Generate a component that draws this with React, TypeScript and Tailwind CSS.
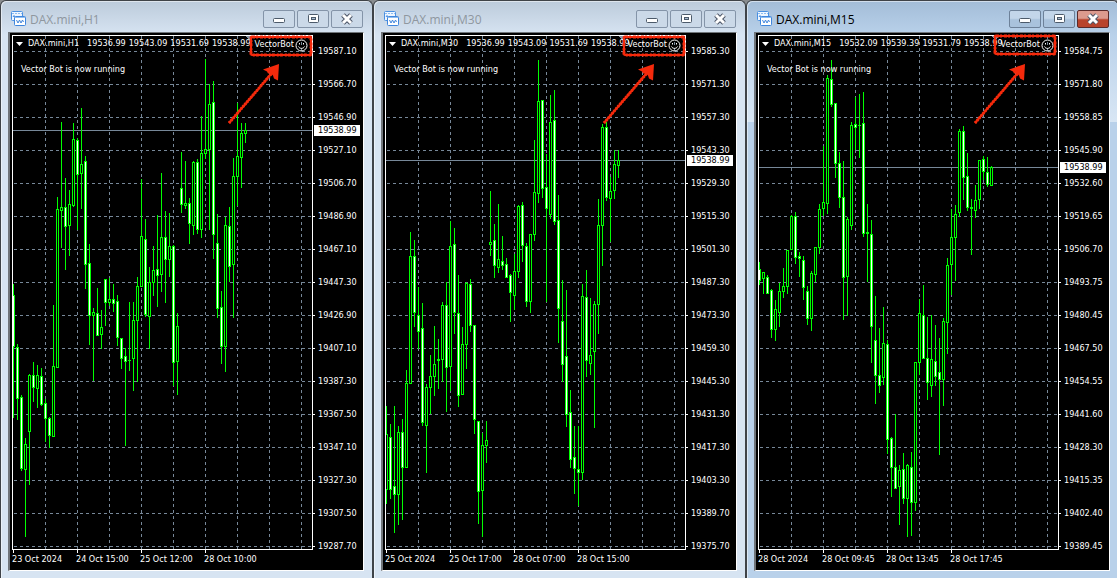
import React from 'react'
import clsx from 'clsx'

// high, body top, body bottom, low, 1 = falling bar
type Candle = [number, number, number, number, number]

interface ChartData {
  symbol: string
  quotes: string[]
  prices: string[]
  times: string[]
  bid: string
  bidY: number
  candles: Candle[]
  active?: boolean
  arrow: [number, number]
  box: [number, number]
}

const H1: Candle[] = [
  [284, 295, 347, 418, 1], [344, 347, 399, 420, 1], [395, 397, 469, 471, 1], [438, 444, 470, 537, 0],
  [374, 375, 432, 485, 0], [362, 375, 388, 402, 1], [365, 375, 389, 408, 0], [368, 376, 405, 406, 1],
  [399, 403, 419, 442, 1], [417, 418, 436, 448, 1], [305, 366, 437, 437, 0], [197, 209, 368, 368, 0],
  [122, 207, 211, 248, 0], [178, 207, 227, 270, 1], [190, 204, 226, 256, 0], [123, 139, 206, 207, 0],
  [138, 140, 175, 230, 1], [108, 164, 174, 209, 0], [156, 161, 265, 289, 1], [244, 263, 316, 345, 1],
  [308, 312, 316, 381, 0], [288, 313, 336, 336, 1], [310, 327, 335, 349, 0], [279, 279, 303, 326, 1],
  [278, 299, 303, 306, 0], [284, 299, 304, 312, 1], [295, 301, 338, 346, 1], [338, 338, 359, 369, 1],
  [348, 356, 362, 446, 1], [302, 360, 361, 371, 0], [302, 320, 359, 391, 0], [277, 286, 321, 382, 0],
  [179, 236, 287, 287, 0], [219, 239, 315, 317, 1], [267, 282, 317, 349, 0], [246, 270, 283, 296, 0],
  [215, 269, 276, 307, 1], [173, 237, 275, 292, 0], [211, 237, 260, 303, 1], [213, 246, 260, 277, 0],
  [245, 246, 363, 386, 1], [313, 326, 362, 395, 0], [152, 188, 205, 213, 1], [161, 203, 206, 209, 0],
  [198, 203, 224, 244, 1], [161, 162, 226, 235, 0], [159, 162, 230, 234, 1], [116, 153, 230, 238, 0],
  [59, 149, 154, 159, 0], [84, 104, 150, 230, 0], [81, 102, 235, 259, 1], [214, 243, 309, 318, 1],
  [291, 307, 347, 364, 1], [217, 225, 347, 372, 0], [207, 226, 267, 282, 1], [158, 176, 265, 318, 0],
  [103, 156, 177, 206, 0], [123, 133, 158, 188, 0], [123, 130, 134, 143, 0],
]

const M30: Candle[] = [
  [406, 434, 490, 504, 0], [424, 437, 490, 499, 1], [406, 486, 495, 533, 1], [426, 432, 495, 525, 0],
  [419, 432, 468, 520, 1], [370, 383, 468, 468, 0], [232, 256, 384, 384, 0], [240, 256, 313, 327, 1],
  [287, 315, 332, 349, 1], [303, 328, 423, 426, 1], [384, 387, 426, 473, 0], [355, 376, 388, 414, 0],
  [326, 364, 377, 396, 0], [339, 359, 361, 389, 0], [302, 305, 360, 382, 0], [282, 305, 368, 412, 1],
  [221, 246, 367, 391, 0], [228, 244, 313, 334, 1], [275, 313, 396, 407, 1], [327, 344, 395, 395, 0],
  [282, 283, 345, 369, 0], [279, 284, 326, 332, 1], [325, 325, 420, 434, 1], [421, 421, 492, 524, 1],
  [433, 445, 491, 537, 0], [421, 440, 446, 463, 0], [191, 242, 245, 256, 0], [224, 240, 266, 278, 1],
  [204, 259, 268, 273, 0], [236, 261, 266, 270, 1], [258, 264, 278, 278, 1], [274, 275, 293, 322, 1],
  [254, 271, 296, 310, 0], [205, 206, 272, 278, 0], [202, 205, 246, 262, 1], [243, 246, 302, 307, 1],
  [234, 234, 302, 313, 0], [140, 192, 235, 241, 0], [60, 101, 194, 203, 0], [100, 100, 189, 198, 1],
  [154, 187, 209, 302, 1], [95, 122, 215, 219, 0], [90, 120, 222, 225, 1], [195, 220, 309, 343, 1],
  [280, 321, 365, 382, 1], [290, 356, 415, 427, 1], [390, 412, 460, 468, 1], [426, 457, 469, 494, 1],
  [426, 469, 473, 506, 1], [284, 296, 473, 480, 0], [270, 297, 361, 377, 1], [298, 355, 364, 375, 0],
  [301, 304, 352, 428, 0], [199, 225, 305, 334, 0], [124, 127, 226, 266, 0], [122, 127, 198, 201, 1],
  [177, 191, 199, 242, 0], [150, 164, 191, 199, 0], [150, 160, 166, 178, 0],
]

const M15: Candle[] = [
  [262, 269, 281, 285, 1], [272, 272, 279, 294, 0], [275, 277, 294, 294, 1], [289, 290, 330, 338, 1],
  [300, 309, 330, 341, 0], [283, 291, 313, 327, 0], [268, 286, 292, 298, 0], [250, 250, 287, 294, 0],
  [215, 216, 250, 250, 0], [212, 216, 258, 264, 1], [252, 256, 259, 277, 1], [256, 260, 288, 300, 1],
  [286, 291, 319, 325, 1], [271, 273, 319, 331, 0], [247, 247, 275, 282, 0], [204, 209, 248, 254, 0],
  [146, 202, 209, 216, 0], [75, 78, 204, 214, 0], [60, 79, 105, 107, 1], [103, 103, 164, 178, 1],
  [152, 163, 198, 208, 1], [161, 197, 278, 320, 1], [217, 219, 277, 316, 0], [122, 125, 226, 230, 0],
  [97, 124, 128, 150, 1], [94, 125, 126, 158, 0], [92, 123, 234, 237, 1], [204, 232, 234, 282, 0],
  [220, 234, 327, 363, 1], [296, 340, 376, 404, 1], [328, 375, 386, 393, 1], [307, 343, 378, 385, 0],
  [340, 344, 440, 454, 1], [437, 438, 468, 497, 1], [414, 467, 489, 489, 1], [465, 470, 487, 525, 0],
  [453, 469, 499, 504, 1], [464, 465, 499, 537, 0], [452, 467, 503, 536, 1], [362, 362, 503, 511, 0],
  [299, 313, 363, 375, 0], [285, 315, 359, 359, 1], [317, 358, 383, 400, 1], [315, 359, 386, 397, 0],
  [325, 361, 377, 386, 1], [338, 372, 380, 455, 1], [318, 321, 380, 406, 0], [258, 265, 323, 354, 0],
  [209, 237, 265, 295, 0], [205, 214, 238, 281, 0], [129, 131, 213, 217, 0], [126, 131, 178, 200, 1],
  [153, 176, 208, 211, 1], [199, 207, 209, 255, 0], [185, 200, 211, 218, 0], [160, 160, 200, 209, 0],
  [156, 159, 172, 180, 1], [157, 172, 185, 187, 1], [166, 167, 186, 186, 0],
]

const charts: ChartData[] = [
  {
    symbol: 'DAX.mini,H1',
    quotes: ['19536.99', '19543.09', '19531.69', '19538.99'],
    prices: [
      '19587.10', '19566.70', '19546.90', '19527.10', '19506.70', '19486.90', '19467.10', '19447.30',
      '19426.90', '19407.10', '19387.30', '19367.50', '19347.10', '19327.30', '19307.50', '19287.70',
    ],
    times: ['23 Oct 2024', '24 Oct 15:00', '25 Oct 12:00', '28 Oct 10:00'],
    bid: '19538.99',
    bidY: 130,
    candles: H1,
    arrow: [229, 279],
    box: [251, 37],
  },
  {
    symbol: 'DAX.mini,M30',
    quotes: ['19536.99', '19543.09', '19531.69', '19538.99'],
    prices: [
      '19585.30', '19571.30', '19557.30', '19543.30', '19529.30', '19515.30', '19501.30', '19487.30',
      '19473.30', '19459.30', '19445.30', '19431.30', '19417.30', '19403.30', '19389.70', '19375.70',
    ],
    times: ['25 Oct 2024', '25 Oct 17:00', '28 Oct 07:00', '28 Oct 15:00'],
    bid: '19538.99',
    bidY: 160,
    candles: M30,
    arrow: [231, 281],
    box: [251, 37],
  },
  {
    symbol: 'DAX.mini,M15',
    quotes: ['19532.09', '19539.39', '19531.79', '19538.99'],
    prices: [
      '19584.75', '19571.80', '19558.85', '19545.90', '19532.60', '19519.65', '19506.70', '19493.75',
      '19480.45', '19467.50', '19454.55', '19441.60', '19428.30', '19415.35', '19402.40', '19389.45',
    ],
    times: ['28 Oct 2024', '28 Oct 09:45', '28 Oct 13:45', '28 Oct 17:45'],
    bid: '19538.99',
    bidY: 167,
    candles: M15,
    active: true,
    arrow: [229, 279],
    box: [249, 36],
  },
]

const gridX = [45, 77, 109, 141, 173, 205, 237, 269, 301]
const gridY = Array.from({ length: 16 }, (_, i) => 51 + i * 33)

const ChartIcon: React.FC = () => (
  <svg width="15" height="15" viewBox="0 0 15 15" fill="none" className="shrink-0">
    <rect x="0.500" y="0.500" width="11" height="9" rx="1" fill="#eef6ff" stroke="#4a90e2" />
    <path d="M1 2.500h10" stroke="#8fbdf0" strokeDasharray="2 1" />
    <path d="M2 6 3 4.500 4 6" stroke="#3f86dd" />
    <rect x="3.500" y="5.500" width="11" height="9" rx="1" fill="#fff" stroke="#3f86dd" />
    <path d="M4 6.500h10" stroke="#8fbdf0" />
    <path d="M5.500 9 7 12l1.500-3L10 12l1.500-3 1 2" stroke="#3f86dd" />
  </svg>
)

const WindowButton: React.FC<{ label: string; danger?: boolean; active?: boolean; children: React.ReactNode }> = ({
  label,
  danger,
  active,
  children,
}) => (
  <button
    aria-label={label}
    className={clsx(
      'flex h-[18px] w-8 items-center justify-center rounded-[2px] border',
      danger
        ? 'border-[#5a2a2a] bg-linear-to-b from-[#dc9a8e] from-45% to-[#b8432c] to-55%'
        : active
          ? 'border-[#6d8199] bg-linear-to-b from-[#c3d6ea] from-45% to-[#a9c2dc] to-55%'
          : 'border-[#8494a8] bg-[#cbd9e8]'
    )}
  >
    <svg width="14" height="12" viewBox="0 0 14 12" fill="none">
      {children}
    </svg>
  </button>
)

const TitleBar: React.FC<{ title: string; active?: boolean }> = ({ title, active }) => (
  <header className="flex h-[31px] items-center pt-1 pr-[9px] pl-[10px]">
    <ChartIcon />
    <h2
      className={clsx(
        "ml-1 flex-1 pt-[2px] font-['Open_Sans','Noto_Sans',sans-serif] text-[12px] leading-4",
        active ? 'text-black' : 'text-[#8f979f]'
      )}
    >
      {title}
    </h2>
    <div className="mb-1 flex gap-[2px] pt-1">
      <WindowButton label="Minimize" active={active}>
        <rect x="1.500" y="5.500" width="11" height="4" rx="1" fill="#fff" stroke="#4c5a6a" />
      </WindowButton>
      <WindowButton label="Restore" active={active}>
        <rect x="2.500" y="1.500" width="10" height="8" rx="1" fill="#fff" stroke="#4c5a6a" />
        <rect x="5.500" y="4.500" width="4" height="2" fill="#a9bcd0" stroke="#4c5a6a" />
      </WindowButton>
      <WindowButton label="Close" active={active} danger={active}>
        <path d="M3 2 11 10M11 2 3 10" stroke="#4c5566" strokeWidth="5" />
        <path d="M3 2 11 10M11 2 3 10" stroke="#fff" strokeWidth="3" />
      </WindowButton>
    </div>
  </header>
)

const Plot: React.FC<{ chart: ChartData }> = ({ chart }) => (
  <svg className="block h-[513px] w-full" shapeRendering="crispEdges">
    {/* levels are kept in window coordinates */}
    <g transform="translate(-13 -36)">
      <g stroke="#778899" strokeDasharray="3 3">
        {gridX.map((x) => (
          <line key={x} x1={x + 0.5} x2={x + 0.5} y1="36" y2="549" />
        ))}
        {gridY.map((y) => (
          <line key={y} x1="14" x2="2000" y1={y + 0.5} y2={y + 0.5} />
        ))}
      </g>
      <rect x="13" y={chart.bidY} width="2000" height="1" fill="#778899" />
      <path d="M245 36h8l-4 4z" fill="#8796a5" />
      {chart.candles.map(([high, top, bottom, low, down], i) => {
        const x = 13 + i * 4
        return (
          <g key={i}>
            <rect x={x} y={high} width="1" height={low - high} fill="#00ff00" />
            <rect x={x - 1} y={top} width="3" height={bottom - top} fill="#00ff00" />
            {bottom - top > 2 && (
              <rect x={x} y={top + 1} width="1" height={bottom - top - 2} fill={down ? '#fff' : '#000'} />
            )}
          </g>
        )
      })}
    </g>
  </svg>
)

const Markup: React.FC<{ chart: ChartData }> = ({ chart }) => {
  const [from, tip] = chart.arrow
  const [bx, by] = chart.box
  return (
    <svg className="pointer-events-none absolute -top-px -left-px h-32 w-80" fill="none">
      <g stroke="#f52a0c">
        <rect x={bx} y={by} width="60" height="18" rx="1" strokeWidth="2" />
        <rect x={bx} y={by} width="60" height="18" rx="1" strokeWidth="3" strokeDasharray="3 1 2 2" />
        <line x1={from} y1="123" x2={tip - 7} y2="73" strokeWidth="2" />
        <line x1={from} y1="123" x2={tip - 7} y2="73" strokeWidth="3" strokeDasharray="2 1" />
      </g>
      <path d={`M${tip} 64 ${tip - 16} 69.500l4 2 1 2 3 0 2 2 1 3 4 2z`} fill="#f52a0c" />
    </svg>
  )
}

const ChartWindow: React.FC<{ chart: ChartData }> = ({ chart }) => (
  <section
    className={clsx(
      'relative w-1/3 min-w-[373px] shrink-0 rounded-t-[6px] border-x border-t border-[#3f4348] pb-[7px] shadow-[inset_1px_1px_0_#ffffff80]',
      chart.active
        ? 'bg-[linear-gradient(#a3bdd8_0,#b9d1ea_34px,#d8e6f4_121px,#b9d1ea_121px)]'
        : 'bg-[linear-gradient(#bccbdb_0,#d7e4f2_34px)]'
    )}
  >
    <TitleBar title={chart.symbol} active={chart.active} />
    <div className="mr-[8px] ml-[7px] flex border-t border-r border-b border-l-2 border-t-[#70757a] border-r-white border-b-white border-l-[#70757a] bg-black pt-[2px] pl-[2px] font-['DejaVu_Sans_Condensed','Noto_Sans',sans-serif] text-[9px] text-white">
      <div className="min-w-0 flex-1">
        <div className="relative border border-white">
          <Plot chart={chart} />
          <div className="absolute top-0 left-[3px] flex h-4 items-center whitespace-nowrap">
            <svg width="7" height="4" className="mr-[5px]">
              <path d="M0 0h7l-3.500 4z" fill="#fff" />
            </svg>
            <span className="mr-2">{chart.symbol}</span>
            <span className="flex gap-[3px]">
              {chart.quotes.map((q, i) => (
                <span key={i}>{q}</span>
              ))}
            </span>
          </div>
          <p className="absolute top-[25px] left-2 leading-4">Vector Bot is now running</p>
          <div className="absolute top-[1px] right-1 flex h-4 items-center gap-[1px]">
            <span>VectorBot</span>
            <svg width="13" height="13" viewBox="0 0 13 13" fill="none" stroke="#fff">
              <circle cx="6.500" cy="6.500" r="5.500" />
              <path d="M3.500 7.500c1 2.500 5 2.500 6 0" />
              <path d="M4.500 4v1.500M8.500 4v1.500" />
            </svg>
          </div>
        </div>
        <div className="flex h-[20px]">
          {chart.times.map((time) => (
            <div key={time} className="w-16 whitespace-nowrap">
              <div className="ml-px h-[3px] w-px bg-white" />
              <span className="block leading-[12px]">{time}</span>
            </div>
          ))}
        </div>
      </div>
      <div className="relative w-[50px]">
        {chart.prices.map((price) => (
          <div key={price} className="flex h-[33px] items-center">
            <span className="mr-[3px] h-px w-[2px] bg-white" />
            {price}
          </div>
        ))}
        <div
          className="absolute left-px w-[46px] bg-white pl-1 leading-[11px] text-black"
          style={{ top: chart.bidY - 40 }}
        >
          {chart.bid}
        </div>
      </div>
    </div>
    <Markup chart={chart} />
  </section>
)

const App: React.FC = () => (
  <main className="flex min-h-screen items-start overflow-hidden bg-[#8a8d90]">
    {charts.map((chart) => (
      <ChartWindow key={chart.symbol} chart={chart} />
    ))}
  </main>
)

export default App
